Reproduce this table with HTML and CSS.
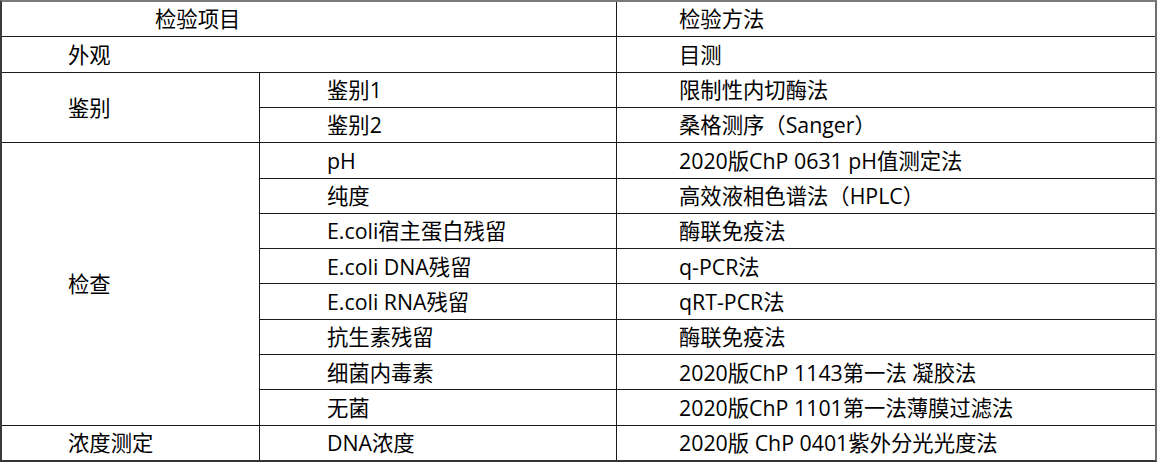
FILE: index.html
```html
<!DOCTYPE html>
<html lang="zh-CN">
<head>
<meta charset="utf-8">
<title>检验项目</title>
<link rel="stylesheet" href="styles.css">
</head>
<body>
<div class="sheet">
  <div class="cell c1 span2 head-left">检验项目</div>
  <div class="cell c3">检验方法</div>

  <div class="cell c1 span2">外观</div>
  <div class="cell c3">目测</div>

  <div class="cell c1 rows2">鉴别</div>
  <div class="cell c2">鉴别1</div>
  <div class="cell c3">限制性内切酶法</div>
  <div class="cell c2">鉴别2</div>
  <div class="cell c3">桑格测序（Sanger）</div>

  <div class="cell c1 rows8">检查</div>
  <div class="cell c2">pH</div>
  <div class="cell c3">2020版ChP 0631 pH值测定法</div>
  <div class="cell c2">纯度</div>
  <div class="cell c3">高效液相色谱法（HPLC）</div>
  <div class="cell c2">E.coli宿主蛋白残留</div>
  <div class="cell c3">酶联免疫法</div>
  <div class="cell c2">E.coli DNA残留</div>
  <div class="cell c3">q-PCR法</div>
  <div class="cell c2">E.coli RNA残留</div>
  <div class="cell c3">qRT-PCR法</div>
  <div class="cell c2">抗生素残留</div>
  <div class="cell c3">酶联免疫法</div>
  <div class="cell c2">细菌内毒素</div>
  <div class="cell c3">2020版ChP 1143第一法 凝胶法</div>
  <div class="cell c2">无菌</div>
  <div class="cell c3">2020版ChP 1101第一法薄膜过滤法</div>

  <div class="cell c1">浓度测定</div>
  <div class="cell c2">DNA浓度</div>
  <div class="cell c3">2020版 ChP 0401紫外分光光度法</div>
</div>
</body>
</html>
```

FILE: styles.css
```css
html, body {
  margin: 0;
  padding: 0;
  background: #ffffff;
}

.sheet {
  box-sizing: border-box;
  width: 1157px;
  height: 462px;
  display: grid;
  grid-template-columns: 257px 356px 538px;
  grid-template-rows: repeat(13, 1fr);
  gap: 1px;
  background: #1a1a1a;
  border-top: 2px solid #7a7a7a;
  border-left: 2px solid #3a3a3a;
  border-right: 2px solid #6e6e6e;
  border-bottom: 2px solid #333333;
  font-family: "Open Sans", "Noto Sans CJK SC", sans-serif;
  font-size: 21.33px;
  line-height: 1;
  color: #000000;
}

.cell {
  background: #ffffff;
  display: flex;
  align-items: center;
  white-space: nowrap;
}

.c1 { padding-left: 66px; }
.c2 { padding-left: 67px; }
.c3 { padding-left: 62px; }

.head-left { padding-left: 153px; }

.span2 { grid-column: span 2; }
.rows2 { grid-row: span 2; }
.rows8 { grid-row: span 8; }
```
